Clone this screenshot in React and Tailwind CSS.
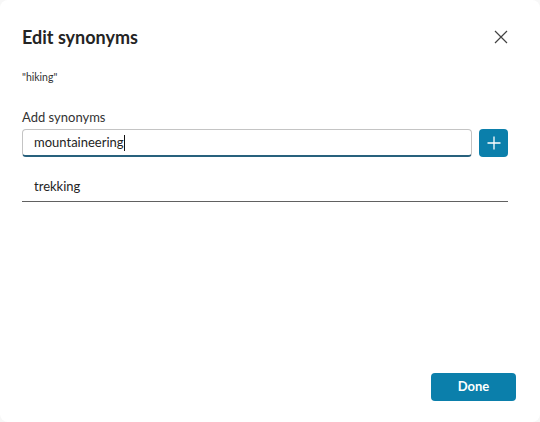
import React from "react";

export default function App() {
  return (
    <div className="w-[540px] h-[422px] bg-[#f7f7f7]" style={{ fontFamily: 'Lato, "Noto Sans", sans-serif' }}>
      <div className="w-full h-full bg-white rounded-lg flex flex-col pl-[22px] pr-[32px] pt-[24px] pb-[21px] text-[#242424]">
        <div className="flex items-start justify-between">
          <h1 className="text-[18px] font-bold leading-[26px]">Edit synonyms</h1>
          <button className="w-[24px] h-[24px] flex items-center justify-center mt-[1px] mr-[-5px]">
            <svg width="14" height="14" viewBox="0 0 14 14" fill="none" stroke="#424242" strokeWidth="1.2">
              <path d="M1 1 L13 13 M13 1 L1 13" />
            </svg>
          </button>
        </div>
        <div className="mt-[20px] text-[10.5px] leading-[14px] text-[#333]">"hiking"</div>
        <div className="mt-[24px] text-[13px] leading-[18px] text-[#333]">Add synonyms</div>
        <div className="mt-[3px] flex items-center gap-[7px]">
          <div className="flex-1 h-[28px] border border-[#c4c4c4] border-b-[#28617d] border-b-2 rounded-[4px] flex items-center pl-[11px] text-[13px]">
            <span>mountaineering</span>
            <span className="inline-block w-[1px] h-[16px] bg-[#111]"></span>
          </div>
          <button className="w-[29px] h-[28px] rounded-[4px] bg-[#0b7fab] flex items-center justify-center">
            <svg width="14" height="14" viewBox="0 0 14 14" fill="none" stroke="white" strokeWidth="1.3">
              <path d="M7 0.5 V13.5 M0.5 7 H13.5" />
            </svg>
          </button>
        </div>
        <div className="mt-[15px] w-[486px] h-[30px] border-b border-[#616161] flex items-center pl-[12px] text-[13px]">
          trekking
        </div>
        <div className="flex-1"></div>
        <div className="flex justify-end mr-[-8px]">
          <button className="w-[85px] h-[28px] rounded-[4px] bg-[#0b7fab] text-white text-[13px] font-bold">Done</button>
        </div>
      </div>
    </div>
  );
}
